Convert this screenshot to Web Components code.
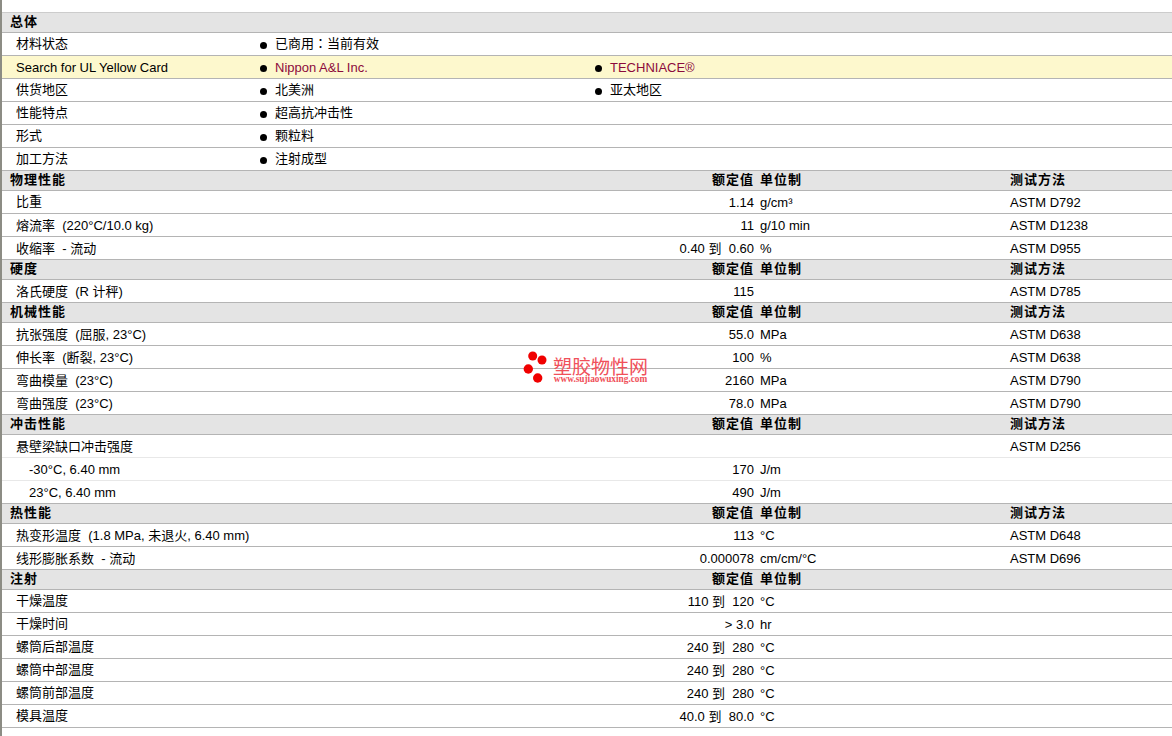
<!DOCTYPE html>
<html>
<head>
<meta charset="utf-8">
<title>总体</title>
<style>
    html, body { margin: 0; background: #fff; }
</style>
</head>
<body>
<data-sheet>
    <sheet-section title="总体" plain>
        <list-row label="材料状态"><list-item>已商用<span style="font-family: 'Noto Sans CJK TC', sans-serif; line-height: 0">：</span>当前有效</list-item></list-row>
        <list-row label="Search for UL Yellow Card" highlight latin>
            <list-item link>Nippon A&amp;L Inc.</list-item>
            <list-item link>TECHNIACE®</list-item>
        </list-row>
        <list-row label="供货地区"><list-item>北美洲</list-item><list-item>亚太地区</list-item></list-row>
        <list-row label="性能特点"><list-item>超高抗冲击性</list-item></list-row>
        <list-row label="形式"><list-item>颗粒料</list-item></list-row>
        <list-row label="加工方法"><list-item>注射成型</list-item></list-row>
    </sheet-section>
    <sheet-section title="物理性能" method>
        <data-row label="比重" value="1.14" unit="g/cm³" method="ASTM D792" snug></data-row>
        <data-row label="熔流率&#160;&#160;(220°C/10.0 kg)" value="11" unit="g/10 min" method="ASTM D1238"></data-row>
        <data-row label="收缩率&#160;&#160;- 流动" value="0.40 到&#160;&#160;0.60" unit="%" method="ASTM D955"></data-row>
    </sheet-section>
    <sheet-section title="硬度" method>
        <data-row label="洛氏硬度&#160;&#160;(R 计秤)" value="115" method="ASTM D785"></data-row>
    </sheet-section>
    <sheet-section title="机械性能" method>
        <data-row label="抗张强度&#160;&#160;(屈服, 23°C)" value="55.0" unit="MPa" method="ASTM D638"></data-row>
        <data-row label="伸长率&#160;&#160;(断裂, 23°C)" value="100" unit="%" method="ASTM D638"></data-row>
        <data-row label="弯曲模量&#160;&#160;(23°C)" value="2160" unit="MPa" method="ASTM D790"></data-row>
        <data-row label="弯曲强度&#160;&#160;(23°C)" value="78.0" unit="MPa" method="ASTM D790"></data-row>
    </sheet-section>
    <sheet-section title="冲击性能" method>
        <data-row label="悬壁梁缺口冲击强度" method="ASTM D256" soft></data-row>
        <data-row label="-30°C, 6.40 mm" value="170" unit="J/m" sub soft></data-row>
        <data-row label="23°C, 6.40 mm" value="490" unit="J/m" sub></data-row>
    </sheet-section>
    <sheet-section title="热性能" method>
        <data-row label="热变形温度&#160;&#160;(1.8 MPa, 未退火, 6.40 mm)" value="113" unit="°C" method="ASTM D648"></data-row>
        <data-row label="线形膨胀系数&#160;&#160;- 流动" value="0.000078" unit="cm/cm/°C" method="ASTM D696"></data-row>
    </sheet-section>
    <sheet-section title="注射">
        <data-row label="干燥温度" value="110 到&#160;&#160;120" unit="°C" snug></data-row>
        <data-row label="干燥时间" value="&gt; 3.0" unit="hr" snug></data-row>
        <data-row label="螺筒后部温度" value="240 到&#160;&#160;280" unit="°C" snug></data-row>
        <data-row label="螺筒中部温度" value="240 到&#160;&#160;280" unit="°C" snug></data-row>
        <data-row label="螺筒前部温度" value="240 到&#160;&#160;280" unit="°C" snug></data-row>
        <data-row label="模具温度" value="40.0 到&#160;&#160;80.0" unit="°C" snug></data-row>
    </sheet-section>
    <site-mark></site-mark>
</data-sheet>

<script>
const FONT = '"Liberation Sans", "Noto Sans CJK SC", sans-serif';

class DataSheet extends HTMLElement {
    constructor() {
        super();
        this.attachShadow({ mode: 'open' }).innerHTML = `
            <style>
                :host {
                    display: block;
                    position: relative;
                    box-sizing: border-box;
                    width: 1172px;
                    height: 736px;
                    padding-top: 12px;
                    overflow: hidden;
                    border-left: 2px solid #8c8c84;
                    background: #fff;
                    color: #000;
                    font: 13px/22px ${FONT};
                }
            </style>
            <slot></slot>
        `;
    }
}

class SheetSection extends HTMLElement {
    constructor() {
        super();
        this.attachShadow({ mode: 'open' }).innerHTML = `
            <style>
                :host { display: block; }
                .head {
                    display: grid;
                    grid-template-columns: 744px 256px 1fr;
                    box-sizing: border-box;
                    height: 20px;
                    padding-left: 8px;
                    background: #e4e4e4;
                    border-bottom: 1px solid #b4b4b4;
                    font-weight: bold;
                    letter-spacing: 1px;
                    line-height: 18px;
                }
                :host(:first-of-type) .head {
                    height: 21px;
                    border-top: 1px solid #cccccc;
                }
                .mid { display: flex; justify-content: space-between; }
                .unit { padding-left: 6px; }
            </style>
            <div class="head">
                <div class="mid"><span class="title"></span><span class="col"></span></div>
                <div class="unit"></div>
                <div class="method"></div>
            </div>
            <slot></slot>
        `;
    }

    connectedCallback() {
        const root = this.shadowRoot;
        root.querySelector('.title').textContent = this.getAttribute('title');
        if (this.hasAttribute('plain')) return;
        root.querySelector('.col').textContent = '额定值';
        root.querySelector('.unit').textContent = '单位制';
        if (this.hasAttribute('method')) root.querySelector('.method').textContent = '测试方法';
    }
}

class ListRow extends HTMLElement {
    constructor() {
        super();
        this.attachShadow({ mode: 'open' }).innerHTML = `
            <style>
                :host {
                    display: grid;
                    grid-template-columns: 244px 335px 335px;
                    box-sizing: border-box;
                    height: 23px;
                    padding-left: 14px;
                    border-bottom: 1px solid #b4b4b4;
                }
                :host([highlight]) { background: #fdf8cd; }
                :host([latin]) .label { padding-top: 1px; }
            </style>
            <div class="label"></div>
            <slot></slot>
        `;
    }

    connectedCallback() {
        this.shadowRoot.querySelector('.label').textContent = this.getAttribute('label');
    }
}

class ListItem extends HTMLElement {
    constructor() {
        super();
        this.attachShadow({ mode: 'open' }).innerHTML = `
            <style>
                :host { display: flex; align-items: center; gap: 8px; height: 22px; }
                :host([link]) { color: #8c0a3c; }
                :host([link]) span { padding-top: 2px; }
                i { width: 7px; height: 7px; margin-top: 2px; border-radius: 50%; background: #000; }
            </style>
            <i></i><span><slot></slot></span>
        `;
    }
}

class DataRow extends HTMLElement {
    constructor() {
        super();
        this.attachShadow({ mode: 'open' }).innerHTML = `
            <style>
                :host {
                    display: grid;
                    grid-template-columns: 1fr auto 256px 162px;
                    box-sizing: border-box;
                    height: 23px;
                    padding-left: 14px;
                    border-bottom: 1px solid #b4b4b4;
                    white-space: nowrap;
                }
                :host([sub]) { padding-left: 27px; }
                :host([soft]) { border-bottom-color: #e8e8e8; }
                .label, .value, .unit, .method { padding-top: 1px; }
                :host([snug]) .label { padding-top: 0; }
                .unit { padding-left: 6px; }
                .value { text-align: right; }
            </style>
            <div class="label"></div>
            <div class="value"></div>
            <div class="unit"></div>
            <div class="method"></div>
        `;
    }

    connectedCallback() {
        for (const name of ['label', 'value', 'unit', 'method']) {
            this.shadowRoot.querySelector('.' + name).textContent = this.getAttribute(name) || '';
        }
    }
}

class SiteMark extends HTMLElement {
    constructor() {
        super();
        this.attachShadow({ mode: 'open' }).innerHTML = `
            <style>
                :host {
                    position: absolute;
                    left: 521px;
                    top: 350px;
                    display: flex;
                    gap: 5px;
                    color: #f0505a;
                    pointer-events: none;
                }
                svg { display: block; }
                .text { display: flex; flex-direction: column; align-items: center; margin-top: 6px; }
                .name { font: 19px/19px "Noto Sans CJK SC", sans-serif; }
                .url { font: bold 9.300px/8px "Liberation Serif", serif; }
            </style>
            <svg width="25" height="33" viewBox="0 0 25 33">
                <circle cx="9.700" cy="6" r="4.500" fill="#f00000"/>
                <circle cx="19" cy="10" r="4.500" fill="#f00000"/>
                <circle cx="5.300" cy="19" r="4.700" fill="#f00000"/>
                <circle cx="14.700" cy="28" r="4.700" fill="#f00000"/>
            </svg>
            <div class="text">
                <div class="name">塑胶物性网</div>
                <div class="url">www.sujiaowuxing.com</div>
            </div>
        `;
    }
}

customElements.define('data-sheet', DataSheet);
customElements.define('sheet-section', SheetSection);
customElements.define('list-row', ListRow);
customElements.define('list-item', ListItem);
customElements.define('data-row', DataRow);
customElements.define('site-mark', SiteMark);
</script>
</body>
</html>
